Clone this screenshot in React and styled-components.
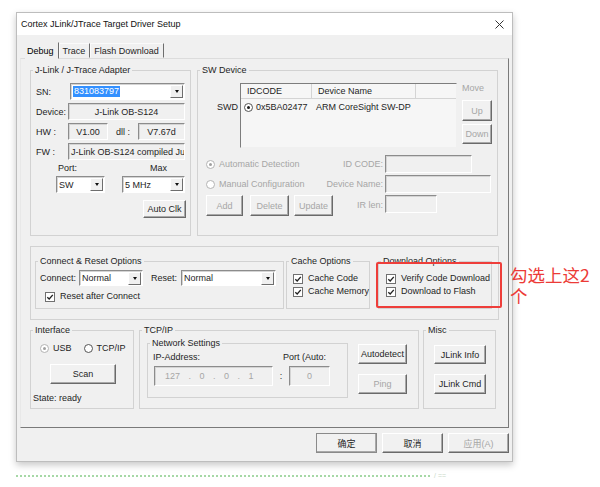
import React from "react";
import styled, { createGlobalStyle } from "styled-components";

const GlobalStyle = createGlobalStyle`
  html, body {
    margin: 0;
    padding: 0;
    background: #ffffff;
  }
  body {
    font-family: "Liberation Sans", Arial, "Noto Sans CJK SC", sans-serif;
    font-size: 9px;
    color: #1e1e1e;
  }
`;

const Page = styled.div`
  position: relative;
  width: 600px;
  height: 487px;
  overflow: hidden;
  box-sizing: border-box;
  padding: 12px 0 0 16px;
`;

const Dialog = styled.div`
  width: 497px;
  height: 450px;
  box-sizing: border-box;
  display: flex;
  flex-direction: column;
  background: #f0f0f0;
  border: 1px solid #bdbdbd;
  box-shadow: 0 3px 7px rgba(0, 0, 0, 0.22);
`;

const TitleBar = styled.div`
  height: 22px;
  flex: none;
  display: flex;
  align-items: center;
  justify-content: space-between;
  padding: 0 8px 0 4px;
  background: #ffffff;
  color: #111;
`;

const Body = styled.div`
  flex: 1;
  display: flex;
  flex-direction: column;
  padding: 7px 3px 0 3px;
`;

const TabBar = styled.div`
  display: flex;
  align-items: flex-end;
  height: 16px;
  margin-left: 5px;
  position: relative;
  z-index: 1;
`;

const Tab = styled.div`
  height: ${(p) => (p.$active ? 17 : 15)}px;
  margin-bottom: ${(p) => (p.$active ? -1 : 0)}px;
  box-sizing: border-box;
  padding: 0 4px 0 ${(p) => (p.$active ? 1 : 3)}px;
  display: flex;
  align-items: center;
  border: 1px solid;
  border-color: #fafafa #6e6e6e transparent #fafafa;
  border-left-color: ${(p) => (p.$active ? "transparent" : "#fafafa")};
  border-top-color: ${(p) => (p.$active ? "transparent" : "#fafafa")};
  color: ${(p) => (p.$active ? "#000" : "#1e1e1e")};
  background: #f0f0f0;
`;

const Panel = styled.div`
  height: 370px;
  box-sizing: border-box;
  border: 1px solid;
  border-color: #dcdcdc #7a7a7a #7a7a7a #e8e8e8;
  padding: 6px 0 0 9px;
  display: flex;
  flex-direction: column;
`;

const Row = styled.div`
  display: flex;
  align-items: ${(p) => p.$align || "flex-start"};
  margin-top: ${(p) => p.$mt || 0}px;
  margin-left: ${(p) => p.$ml || 0}px;
  gap: ${(p) => p.$gap || 0}px;
  justify-content: ${(p) => p.$justify || "flex-start"};
`;

const Group = styled.fieldset`
  margin: 0 0 0 ${(p) => p.$ml || 0}px;
  padding: 0;
  min-width: 0;
  width: ${(p) => p.$w}px;
  height: ${(p) => p.$h}px;
  box-sizing: border-box;
  border: 1px solid #d2d2d2;
  flex: none;
`;

const Legend = styled.legend`
  margin-left: 2px;
  padding: 0 2px;
  line-height: 10px;
  color: #1e1e1e;
`;

const Inner = styled.div`
  padding: ${(p) => p.$pad || "0"};
`;

const Text = styled.span`
  display: inline-block;
  width: ${(p) => (p.$w ? `${p.$w}px` : "auto")};
  text-align: ${(p) => p.$align || "left"};
  color: ${(p) => (p.$dim ? "#a6a6a6" : "#1e1e1e")};
  line-height: 10px;
  white-space: nowrap;
  flex: none;
`;

const Field = styled.div`
  width: ${(p) => p.$w}px;
  height: ${(p) => p.$h || 17}px;
  margin-left: ${(p) => p.$ml || 0}px;
  box-sizing: border-box;
  display: flex;
  align-items: center;
  justify-content: ${(p) => (p.$center ? "center" : "flex-start")};
  padding: 0 3px;
  overflow: hidden;
  white-space: nowrap;
  background: ${(p) => (p.$white ? "#ffffff" : "#f0f0f0")};
  border: 1px solid;
  border-color: #8c8c8c #ffffff #ffffff #8c8c8c;
  box-shadow: inset 1px 1px 0 #d4d4d4;
  color: ${(p) => (p.$dim ? "#a6a6a6" : "#1e1e1e")};
  flex: none;
`;

const Combo = styled(Field)`
  background: #ffffff;
  padding: 0 1px 0 2px;
  justify-content: space-between;
`;

const Selected = styled.span`
  background: #3390ff;
  color: #ffffff;
  padding: 0 1px;
  line-height: 11px;
`;

const ComboArrow = styled.span`
  width: 13px;
  height: 13px;
  box-sizing: border-box;
  flex: none;
  display: flex;
  align-items: center;
  justify-content: center;
  background: #f0f0f0;
  border: 1px solid;
  border-color: #ffffff #6e6e6e #6e6e6e #ffffff;
  &::after {
    content: "";
    border-left: 2.5px solid transparent;
    border-right: 2.5px solid transparent;
    border-top: 3px solid #111;
  }
`;

const Button = styled.div`
  width: ${(p) => p.$w}px;
  height: ${(p) => p.$h || 20}px;
  margin-top: ${(p) => p.$mt || 0}px;
  margin-left: ${(p) => p.$ml || 0}px;
  box-sizing: border-box;
  flex: none;
  display: flex;
  align-items: center;
  justify-content: center;
  background: #f1f1f1;
  border: 1px solid;
  border-color: #ffffff #6a6a6a #6a6a6a #ffffff;
  box-shadow: inset -1px -1px 0 #a9a9a9;
  color: ${(p) => (p.$dim ? "#a6a6a6" : "#1e1e1e")};
  white-space: nowrap;
`;

const RadioDot = styled.span`
  width: 7px;
  height: 7px;
  flex: none;
  border-radius: 50%;
  border: 1px solid ${(p) => (p.$dim ? "#b4b4b4" : "#555555")};
  background: #ffffff;
  display: inline-flex;
  align-items: center;
  justify-content: center;
  &::after {
    content: "";
    width: 3px;
    height: 3px;
    border-radius: 50%;
    background: ${(p) => (p.$on ? (p.$dim ? "#a0a0a0" : "#1a1a1a") : "transparent")};
  }
`;

const Option = styled.label`
  display: flex;
  align-items: center;
  gap: ${(p) => p.$gap || 3}px;
  height: 11px;
  line-height: 11px;
  margin-left: ${(p) => p.$ml || 0}px;
  color: ${(p) => (p.$dim ? "#a6a6a6" : "#1e1e1e")};
  white-space: nowrap;
`;

const CheckBox = styled.span`
  width: 8px;
  height: 8px;
  flex: none;
  display: inline-flex;
  border: 1px solid #707070;
  background: #ffffff;
  svg {
    width: 8px;
    height: 8px;
  }
`;

const InfoGrid = styled.div`
  display: grid;
  grid-template-columns: 32px 117px;
  grid-auto-rows: 17px;
  row-gap: 3px;
  align-items: center;
`;

const PortGrid = styled.div`
  display: grid;
  grid-template-columns: 49px 63px;
  grid-template-rows: 10px 17px;
  column-gap: 17px;
  row-gap: 3px;
  margin: 3px 0 0 20px;
`;

const DeviceTable = styled.div`
  width: 217px;
  height: 65px;
  margin-left: 2px;
  box-sizing: border-box;
  background: #f6f6f6;
  border: 1px solid;
  border-color: #7d7d7d #f0f0f0 #f0f0f0 #7d7d7d;
  flex: none;
`;

const TableRow = styled.div`
  display: grid;
  grid-template-columns: 71px 104px 1fr;
  height: ${(p) => (p.$head ? 14 : 16)}px;
  align-items: center;
  border-bottom: ${(p) => (p.$head ? "1px solid #d4d4d4" : "none")};
`;

const Cell = styled.div`
  height: 100%;
  display: flex;
  align-items: center;
  gap: 3px;
  padding-left: ${(p) => p.$pl ?? 6}px;
  border-right: ${(p) => (p.$head ? "1px solid #d4d4d4" : "none")};
  white-space: nowrap;
`;

const DetectGrid = styled.div`
  display: grid;
  grid-template-columns: 116px 59px auto;
  grid-template-rows: 18px 18px 21px;
  column-gap: 2px;
  row-gap: 2px;
  align-items: center;
  margin-top: 7px;
`;

const OptionsBox = styled.div`
  width: 469px;
  height: 74px;
  box-sizing: border-box;
  margin-top: 10px;
  border: 1px solid #d2d2d2;
  padding: 9px 0 0 4px;
  display: flex;
  align-items: flex-start;
`;

const Stack = styled.div`
  display: flex;
  flex-direction: column;
  gap: ${(p) => p.$gap || 0}px;
  margin-top: ${(p) => p.$mt || 0}px;
  margin-left: ${(p) => p.$ml || 0}px;
`;

const Footer = styled.div`
  display: flex;
  justify-content: flex-end;
  gap: 5px;
  margin-top: 5px;
`;

const DefaultButton = styled(Button)`
  border-color: #ffffff #3c3c3c #3c3c3c #ffffff;
  outline: 1px solid #8a8a8a;
  outline-offset: -1px;
`;

const Dotted = styled.div`
  display: flex;
  align-items: center;
  gap: 4px;
  margin-top: 10px;
`;

const DotLine = styled.div`
  width: 414px;
  border-top: 2px dotted #a6d8a6;
`;

const Faint = styled.span`
  color: #c9d9c9;
  font-size: 7px;
`;

const Highlight = styled.div`
  position: absolute;
  left: 376px;
  top: 262px;
  width: 126px;
  height: 46px;
  box-sizing: border-box;
  border: 2px solid #ee3e3a;
  border-radius: 2px;
`;

const Note = styled.div`
  position: absolute;
  left: 510px;
  top: 264px;
  width: 88px;
  color: #ec3b37;
  font-family: "Noto Sans CJK SC", "Noto Sans", sans-serif;
  font-size: 17.5px;
  line-height: 21px;
`;

const Check = () => (
  <CheckBox>
    <svg viewBox="0 0 8 8">
      <path d="M1.3 4.2 L3.2 6 L6.8 1.8" fill="none" stroke="#222" strokeWidth="1.3" />
    </svg>
  </CheckBox>
);

const CloseIcon = () => (
  <svg width="9" height="9" viewBox="0 0 9 9">
    <path d="M0.5 0.5 L8.5 8.5 M8.5 0.5 L0.5 8.5" stroke="#333" strokeWidth="1" />
  </svg>
);

const AdapterGroup = () => (
  <Group $w={161} $h={171}>
    <Legend>J-Link / J-Trace Adapter</Legend>
    <Inner $pad="8px 4px 0 5px">
      <InfoGrid>
        <Text>SN:</Text>
        <Combo $w={115} $ml={2}>
          <Selected>831083797</Selected>
          <ComboArrow />
        </Combo>
        <Text>Device:</Text>
        <Field $w={117} $center>J-Link OB-S124</Field>
        <Text>HW :</Text>
        <Row $align="center" $justify="space-between">
          <Field $w={40} $center>V1.00</Field>
          <Text>dll :</Text>
          <Field $w={47} $center>V7.67d</Field>
        </Row>
        <Text>FW :</Text>
        <Field $w={117} style={{ paddingLeft: 2 }}>J-Link OB-S124 compiled Ju</Field>
      </InfoGrid>
      <PortGrid>
        <Text style={{ paddingLeft: 2 }}>Port:</Text>
        <Text style={{ paddingLeft: 28 }}>Max</Text>
        <Combo $w={49}>
          SW
          <ComboArrow />
        </Combo>
        <Combo $w={63}>
          5 MHz
          <ComboArrow />
        </Combo>
      </PortGrid>
      <Row $justify="flex-end" $mt={7}>
        <Button $w={43} $h={18}>Auto Clk</Button>
      </Row>
    </Inner>
  </Group>
);

const SwDeviceGroup = () => (
  <Group $w={301} $h={171}>
    <Legend>SW Device</Legend>
    <Inner $pad="8px 0 0 8px">
      <Row>
        <Text $w={32} $align="right" style={{ marginTop: 19 }}>SWD</Text>
        <DeviceTable>
          <TableRow $head>
            <Cell $head>IDCODE</Cell>
            <Cell $head>Device Name</Cell>
            <Cell />
          </TableRow>
          <TableRow>
            <Cell $pl={3}>
              <RadioDot $on />
              0x5BA02477
            </Cell>
            <Cell $pl={4}>ARM CoreSight SW-DP</Cell>
          </TableRow>
        </DeviceTable>
        <Stack $ml={5}>
          <Text $dim>Move</Text>
          <Button $w={30} $h={21} $mt={7} $dim>Up</Button>
          <Button $w={30} $h={20} $mt={3} $dim>Down</Button>
        </Stack>
      </Row>
      <DetectGrid>
        <Option $dim $gap={4}>
          <RadioDot $on $dim />
          Automatic Detection
        </Option>
        <Text $dim $align="right">ID CODE:</Text>
        <Field $w={87} $h={18} />
        <Option $dim $gap={4}>
          <RadioDot $dim />
          Manual Configuration
        </Option>
        <Text $dim $align="right">Device Name:</Text>
        <Field $w={106} $h={18} />
        <Row $align="center">
          <Button $w={37} $h={21} $dim>Add</Button>
          <Button $w={39} $h={21} $ml={7} $dim>Delete</Button>
          <Button $w={39} $h={21} $ml={5} $dim>Update</Button>
        </Row>
        <Text $dim $align="right" style={{ alignSelf: "start", marginTop: 5 }}>IR len:</Text>
        <Field $w={52} $h={18} style={{ alignSelf: "start" }} />
      </DetectGrid>
    </Inner>
  </Group>
);

const OptionsSection = () => (
  <OptionsBox>
    <Group $w={249} $h={53}>
      <Legend>Connect &amp; Reset Options</Legend>
      <Inner $pad="4px 0 0 4px">
        <Row $align="center">
          <Text $w={39}>Connect:</Text>
          <Combo $w={64} $h={16}>
            Normal
            <ComboArrow />
          </Combo>
          <Text $w={30} style={{ marginLeft: 8 }}>Reset:</Text>
          <Combo $w={95} $h={16}>
            Normal
            <ComboArrow />
          </Combo>
        </Row>
        <Stack $mt={5} $ml={5}>
          <Option $gap={5}>
            <Check />
            Reset after Connect
          </Option>
        </Stack>
      </Inner>
    </Group>
    <Group $w={84} $h={53} $ml={2}>
      <Legend>Cache Options</Legend>
      <Stack $mt={7} $ml={6} $gap={2}>
        <Option $gap={5}>
          <Check />
          Cache Code
        </Option>
        <Option $gap={5}>
          <Check />
          Cache Memory
        </Option>
      </Stack>
    </Group>
    <Group $w={114} $h={53} $ml={8}>
      <Legend>Download Options</Legend>
      <Stack $mt={7} $ml={7} $gap={2}>
        <Option $gap={5}>
          <Check />
          Verify Code Download
        </Option>
        <Option $gap={5}>
          <Check />
          Download to Flash
        </Option>
      </Stack>
    </Group>
  </OptionsBox>
);

const BottomSection = () => (
  <Row $mt={5}>
    <Group $w={104} $h={84}>
      <Legend>Interface</Legend>
      <Inner $pad="8px 0 0 2px">
        <Row $align="center" $ml={7}>
          <Option $gap={4}>
            <RadioDot $on $dim />
            USB
          </Option>
          <Option $gap={4} $ml={12}>
            <RadioDot />
            TCP/IP
          </Option>
        </Row>
        <Button $w={66} $h={20} $mt={10} $ml={17}>Scan</Button>
        <Stack $mt={9}>
          <Text>State: ready</Text>
        </Stack>
      </Inner>
    </Group>
    <Group $w={280} $h={84} $ml={5}>
      <Legend>TCP/IP</Legend>
      <Inner $pad="3px 0 0 7px">
        <Row>
          <Group $w={201} $h={60}>
            <Legend>Network Settings</Legend>
            <Inner $pad="4px 0 0 5px">
              <Row>
                <Text $w={130}>IP-Address:</Text>
                <Text>Port (Auto:</Text>
              </Row>
              <Row $align="center" $mt={4} $ml={1}>
                <Field $w={119} $h={20} $dim style={{ paddingLeft: 10, wordSpacing: 6 }}>
                  127 . 0 . 0 . 1
                </Field>
                <Text $w={16} $align="center">:</Text>
                <Field $w={41} $h={20} $dim $center>0</Field>
              </Row>
            </Inner>
          </Group>
          <Stack $ml={10} $mt={6}>
            <Button $w={49} $h={20}>Autodetect</Button>
            <Button $w={49} $h={20} $mt={10} $dim>Ping</Button>
          </Stack>
        </Row>
      </Inner>
    </Group>
    <Group $w={73} $h={84} $ml={4}>
      <Legend>Misc</Legend>
      <Inner $pad="10px 0 0 10px">
        <Button $w={52} $h={19}>JLink Info</Button>
        <Button $w={52} $h={20} $mt={10}>JLink Cmd</Button>
      </Inner>
    </Group>
  </Row>
);

const App = () => (
  <>
    <GlobalStyle />
    <Page>
      <Dialog>
        <TitleBar>
          <span>Cortex JLink/JTrace Target Driver Setup</span>
          <CloseIcon />
        </TitleBar>
        <Body>
          <TabBar>
            <Tab $active>Debug</Tab>
            <Tab>Trace</Tab>
            <Tab>Flash Download</Tab>
          </TabBar>
          <Panel>
            <Row $gap={6}>
              <AdapterGroup />
              <SwDeviceGroup />
            </Row>
            <OptionsSection />
            <BottomSection />
          </Panel>
          <Footer>
            <DefaultButton $w={61} $h={20}>确定</DefaultButton>
            <Button $w={61} $h={20}>取消</Button>
            <Button $w={61} $h={20} $dim>应用(A)</Button>
          </Footer>
        </Body>
      </Dialog>
      <Dotted>
        <DotLine />
        <Faint>/ ==</Faint>
      </Dotted>
      <Highlight />
      <Note>勾选上这2个</Note>
    </Page>
  </>
);

export default App;
